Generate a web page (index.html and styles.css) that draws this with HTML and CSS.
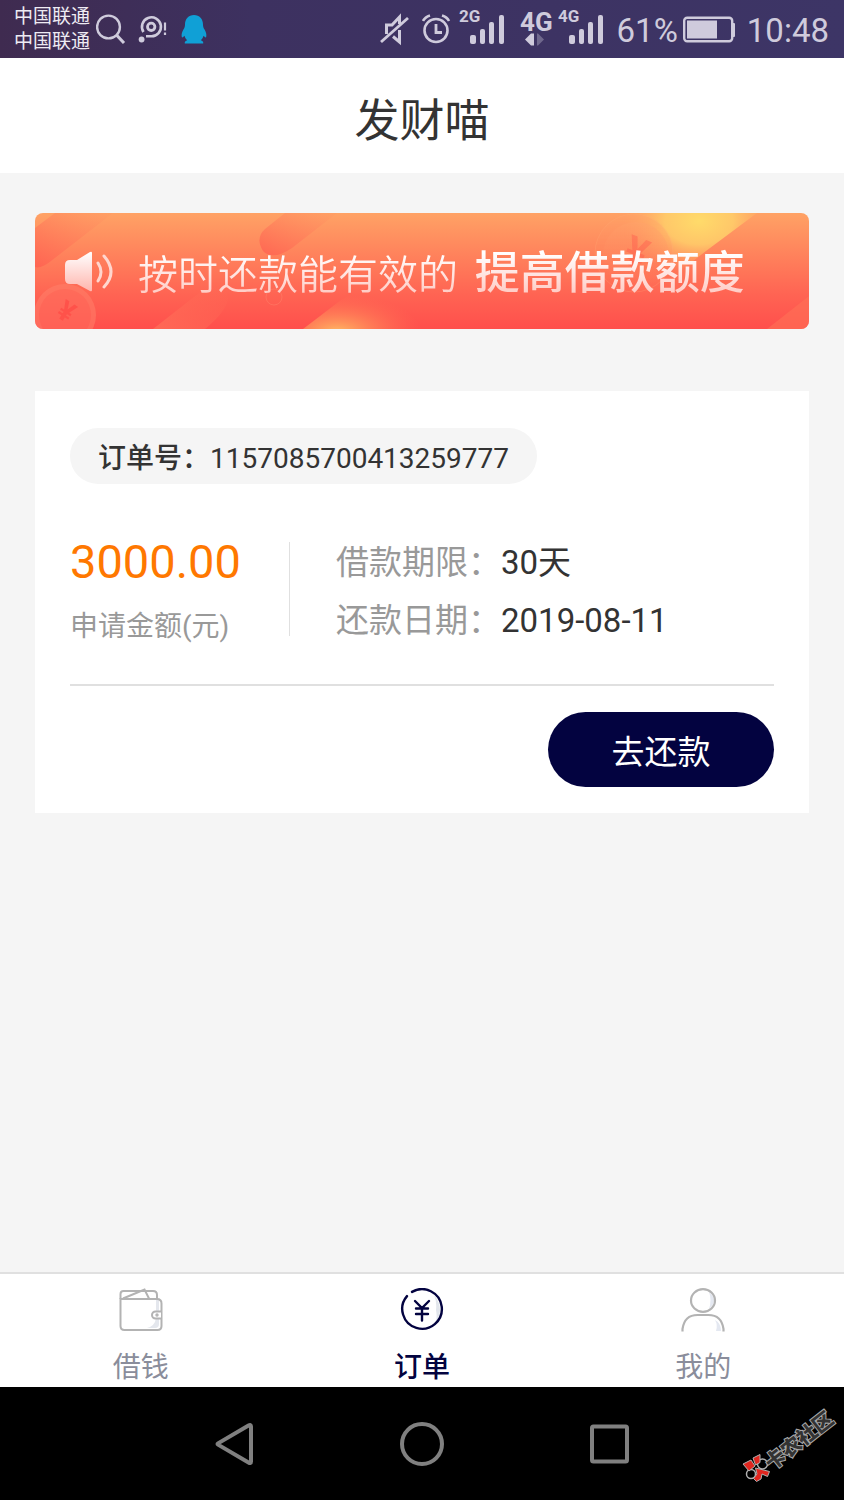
FILE: index.html
```html
<!DOCTYPE html>
<html lang="zh-CN">
<head>
<meta charset="utf-8">
<meta name="viewport" content="width=device-width, initial-scale=1">
<title>发财喵</title>
<link rel="stylesheet" href="styles.css">
</head>
<body>
<div class="status-bar">
  <div class="status-left">
    <div class="carriers"><span>中国联通</span><span>中国联通</span></div>
    <svg width="30" height="32" viewBox="0 0 30 32" fill="none" stroke="#cfcbdc" stroke-width="2.4" aria-hidden="true"><circle cx="12.500" cy="14" r="11.4"/><path d="M20.500 22l7.500 8" stroke-width="3"/></svg>
    <svg class="icon-chat" width="30" height="30" viewBox="0 0 30 30" fill="none" stroke="#cfcbdc" aria-hidden="true"><path d="M5.500 18A9.500 9.500 0 1 1 13 22.300H8" stroke-width="2.600"/><circle cx="13.200" cy="12.800" r="3.700" stroke-width="2.800"/><circle cx="3.600" cy="25.500" r="2.900" fill="#cfcbdc" stroke="none"/><path d="M27 8.500v8M27 18.500v2.500" stroke-width="2.200"/></svg>
    <svg class="icon-qq" width="26" height="31" viewBox="0 0 26 31" fill="#10a0d6" aria-hidden="true"><path d="M13 1C7.500 1 4 5 4 10.500c0 2-.4 3.200-1.400 4.800C1 18 .2 20.500.8 23c.3 1 1.500 0 2.700-1.200.4 2 1.300 3.200 2.700 4.500-1.700.6-2.800 1.500-2.400 3.200h18.400c.4-1.700-.7-2.600-2.400-3.200 1.400-1.300 2.300-2.500 2.700-4.500 1.200 1.200 2.400 2.200 2.700 1.200.6-2.500-.2-5-1.800-7.700-1-1.600-1.400-2.800-1.400-4.800C22 5 18.500 1 13 1z"/></svg>
  </div>
  <div class="status-right">
    <svg width="30" height="34" viewBox="0 0 30 34" fill="none" stroke="#cfcbdc" stroke-width="2.800" aria-hidden="true"><path d="M1 30L28 6"/><path d="M6.500 22V13h5.500L19.500 5v7M19.500 18v12L13 24.500" stroke-width="3"/></svg>
    <svg class="icon-alarm" width="30" height="34" viewBox="0 0 30 34" fill="none" stroke="#cfcbdc" stroke-width="2.600" aria-hidden="true"><circle cx="14" cy="18.500" r="11.500"/><path d="M14 12v8.500h6" stroke-width="2.800"/><path d="M1 9Q3 5 8 3.500M20 3.500Q25 5 27 9"/></svg>
    <svg class="icon-signal" width="48" height="44" viewBox="0 0 48 44" fill="#cfcbdc" role="img" aria-label="2G"><text x="0" y="15" class="net-label">2G</text><rect x="11" y="28" width="6" height="9" rx="2"/><rect x="21" y="22" width="5" height="15" rx="2"/><rect x="30" y="15" width="5" height="22" rx="2"/><rect x="40" y="8" width="5" height="29" rx="2"/></svg>
    <svg class="icon-data" width="32" height="44" viewBox="0 0 32 44" fill="#cfcbdc" role="img" aria-label="4G"><text x="0" y="24" class="data-label">4G</text><path d="M5 32.500l6-6h3v12h-3z"/><path d="M24 32.500l-6-6h-1v12h1z" opacity=".35"/></svg>
    <svg class="icon-signal-second" width="48" height="44" viewBox="0 0 48 44" fill="#cfcbdc" role="img" aria-label="4G"><text x="0" y="15" class="net-label">4G</text><rect x="11" y="28" width="6" height="9" rx="2"/><rect x="21" y="22" width="5" height="15" rx="2"/><rect x="30" y="15" width="5" height="22" rx="2"/><rect x="40" y="8" width="5" height="29" rx="2"/></svg>
    <span class="percent">61%</span>
    <svg width="53" height="28" viewBox="0 0 53 28" aria-hidden="true"><rect x="1.200" y="2.700" width="48" height="23.600" rx="3" fill="none" stroke="#cfcbdc" stroke-width="2.400"/><rect x="4" y="5.500" width="30" height="18" fill="#cfcbdc"/><rect x="49" y="8" width="3" height="14" rx="1" fill="#cfcbdc"/></svg>
    <time class="clock">10:48</time>
  </div>
</div>

<header class="title-bar"><h1>发财喵</h1></header>

<main class="content">
  <section class="banner">
    <svg class="banner-art" viewBox="0 0 774 116" preserveAspectRatio="xMidYMid slice" aria-hidden="true">
      <defs>
        <linearGradient id="base" x1="0" y1="0" x2="0" y2="1"><stop offset="0" stop-color="#ffa265"/><stop offset=".7" stop-color="#ff6453"/><stop offset="1" stop-color="#ff4f4c"/></linearGradient>
        <linearGradient id="band" x1="0" y1="1" x2="1" y2="0"><stop offset="0" stop-color="#ff5f50" stop-opacity=".8"/><stop offset="1" stop-color="#ff8a60" stop-opacity=".1"/></linearGradient>
        <linearGradient id="pale" x1="0" y1="1" x2="1" y2="0"><stop offset="0" stop-color="#ff7a5c" stop-opacity=".6"/><stop offset="1" stop-color="#ff7058" stop-opacity="0"/></linearGradient>
        <radialGradient id="sun"><stop offset="0" stop-color="#ffdb6a"/><stop offset=".45" stop-color="#ffd06a" stop-opacity=".85"/><stop offset="1" stop-color="#ffa866" stop-opacity="0"/></radialGradient>
        <radialGradient id="glow"><stop offset="0" stop-color="#ffba63"/><stop offset="1" stop-color="#ff7055" stop-opacity="0"/></radialGradient>
        <linearGradient id="coin" x1="0" y1="0" x2="0" y2="1"><stop offset="0" stop-color="#ffa36a" stop-opacity=".8"/><stop offset="1" stop-color="#ff7a5c" stop-opacity="0"/></linearGradient>
        <clipPath id="sun-cut"><path d="M540 0H722L671 38L640 62H540z"/></clipPath>
        <clipPath id="glow-cut"><path d="M268 116L306 87Q318 78 340 78H420V116z"/></clipPath>
        <linearGradient id="horn" x1="0" y1="0" x2="0" y2="1"><stop offset="0" stop-color="#fff"/><stop offset="1" stop-color="#ffb5ad"/></linearGradient>
      </defs>
      <rect width="774" height="116" fill="url(#base)"/>
      <path d="M0 15L20 0H78L16 48Q6 56 0 54z" fill="url(#band)"/>
      <path d="M230 16L250 0H302L257 35Q238 48 228 38Q220 25 230 16z" fill="url(#band)"/>
      <path d="M118 116L164 80Q190 65 193 85Q192 98 170 116z" fill="url(#pale)"/>
      <path d="M732 116L774 83V116z" fill="#ff7256" opacity=".6"/>
      <ellipse cx="664" cy="8" rx="76" ry="52" fill="url(#sun)" clip-path="url(#sun-cut)"/>
      <ellipse cx="302" cy="119" rx="85" ry="38" fill="url(#glow)" clip-path="url(#glow-cut)"/>
      <circle cx="239" cy="84" r="8" fill="none" stroke="#ff8169" stroke-width="1" opacity=".5"/>
      <g fill="#ff806a" opacity=".55"><circle cx="30" cy="102" r="31"/><circle cx="30" cy="102" r="26" fill="#ff6f5f"/></g>
      <text class="coin-mark" x="0" y="9" font-size="28" transform="translate(31 99) rotate(33)" opacity=".8">¥</text>
      <circle cx="599" cy="40" r="39" fill="url(#coin)" stroke="#ffb07c" stroke-opacity=".5" opacity=".45"/><circle cx="601" cy="42" r="33" fill="url(#coin)" opacity=".5"/>
      <text class="coin-mark" x="0" y="14" font-size="42" transform="translate(601 40) rotate(22)" opacity=".35">¥</text>
    </svg>
    <svg class="speaker" width="50" height="44" viewBox="0 0 50 44" aria-hidden="true"><path d="M6 11h7L26 3q2-1 2 1v37q0 2-2 1L13 35H6q-5 0-5-5V16q0-5 5-5z" fill="url(#horn)"/><path d="M34 14q6 9 0 18M40 7q14 16 0 31" fill="none" stroke="#ffd6ce" stroke-width="3" stroke-linecap="round"/></svg>
    <p class="banner-text">按时还款能有效的 <strong>提高借款额度</strong></p>
  </section>

  <article class="order-card">
    <p class="order-number"><span>订单号：</span>1157085700413259777</p>
    <div class="order-body">
      <div class="amount">
        <p class="amount-value">3000.00</p>
        <p class="amount-label">申请金额(元)</p>
      </div>
      <dl class="terms">
        <div><dt>借款期限：</dt><dd>30天</dd></div>
        <div><dt>还款日期：</dt><dd>2019-08-11</dd></div>
      </dl>
    </div>
    <div class="order-actions"><button type="button" class="repay">去还款</button></div>
  </article>
</main>

<nav class="tabs">
  <a href="#borrow">
    <svg width="44" height="44" viewBox="0 0 44 44" fill="none" stroke="#b3b3b3" stroke-width="2" aria-hidden="true"><path d="M40 11v25q0 4-4 4h-8q8-2 9-10V11z" fill="#e4e7ed" stroke="none"/><path d="M1.500 11V6q0-3 3-3H34q4 0 4 4v4"/><path d="M4 10.500L25.500 1.500 30 10.500"/><path d="M1.500 11H38q4.500 0 4.500 4.500V38q0 4-4 4H5.500q-4 0-4-4z"/><path d="M42 23.500h-5.500a3.500 3.500 0 0 0 0 7H42" fill="#fff"/><circle cx="38" cy="27" r=".7"/></svg>
    <span>借钱</span>
  </a>
  <a href="#orders" class="active" aria-current="page">
    <svg width="44" height="44" viewBox="0 0 44 44" fill="none" stroke="#030340" stroke-width="2.400" stroke-linecap="round" aria-hidden="true"><path d="M34 7Q46 22 34 37Q38 32 36 22Q37 13 34 7z" fill="#e2e6ec" stroke="none"/><path d="M12 3.900A19.800 19.800 0 1 1 7 8.100"/><path d="M15 13l7 7 7-7M22 20v12.500M16 20.500h12M16 26h12"/></svg>
    <span>订单</span>
  </a>
  <a href="#me">
    <svg width="44" height="44" viewBox="0 0 44 44" fill="none" stroke="#b3b3b3" stroke-width="2.200" aria-hidden="true"><path d="M28 4q10 8 0 17 3-9 0-17zM34 32q6 3 6 11h-5q2-6-1-11z" fill="#e4e8f1" stroke="none"/><ellipse cx="22" cy="12.500" rx="12" ry="11.300"/><path d="M1.500 43.500V41q2-14 15-14h11q13 0 15 14v2.500"/></svg>
    <span>我的</span>
  </a>
</nav>

<div class="system-nav">
  <button type="button" aria-label="返回"><svg width="44" height="46" viewBox="0 0 44 46"><path d="M6 23.600Q5 23 6 22.400L36.500 4.500Q39 3 39 5.500v35q0 2.500-2.500 1z"/></svg></button>
  <button type="button" aria-label="主屏幕"><svg width="44" height="46" viewBox="0 0 44 46"><circle cx="22" cy="23" r="20"/></svg></button>
  <button type="button" aria-label="最近任务"><svg width="44" height="46" viewBox="0 0 44 46"><rect x="4" y="5.500" width="35" height="35" rx="1.500"/></svg></button>
  <svg class="watermark" width="108" height="92" viewBox="0 -8 108 92" role="img" aria-label="卡农社区">
    <g stroke="#b0b0b0" stroke-width="1"><circle cx="16" cy="70" r="4.500" fill="none" stroke-width="1.500"/><circle cx="27.500" cy="60" r="5" fill="none" stroke-width="1.500"/><path d="M8 60l8-4 4 6-6 5zM18 54l7-3.500v8l-4.500 2.500zM20.500 64l14 3.500-2 5-5.500-2.500-1 5-4.500 2.500-3-3 3.500-4.500z" fill="#e0261f"/></g>
    <g transform="translate(37 67) rotate(-38)"><text class="mark-text" x="0" y="0">卡农社区</text></g>
  </svg>
</div>
</body>
</html>
```
FILE: styles.css
```css
* { box-sizing: border-box; }

body {
  margin: 0;
  min-height: 100vh;
  display: flex;
  flex-direction: column;
  background: #f5f5f5;
  color: #333;
  font-family: Roboto, "Noto Sans CJK SC", sans-serif;
}

h1, p, dl, dd { margin: 0; }
svg { display: block; flex: none; }

.status-bar {
  height: 58px;
  padding: 0 15px 0 14px;
  display: flex;
  justify-content: space-between;
  align-items: center;
  background: linear-gradient(90deg, #3f2b50, #3d3160 30%, #3d3566);
  color: #cfcbdc;
}

.status-left, .status-right { display: flex; align-items: center; }

.carriers {
  display: flex;
  flex-direction: column;
  margin-right: 6px;
  color: #eeebf3;
  font-size: 19px;
  line-height: 25px;
}

.icon-chat { margin-left: 12px; }
.icon-qq { margin-left: 13px; }
.icon-alarm { margin-left: 12px; }
.icon-signal { margin-left: 7px; }
.icon-data { margin-left: 13px; }
.icon-signal-second { margin-left: 6px; }
.net-label { font-size: 17px; font-weight: 700; }
.data-label { font-size: 26px; font-weight: 700; }

.percent, .clock { padding-top: 3px; font-size: 33px; }
.percent { margin-left: 11px; margin-right: 5px; }
.clock { margin-left: 11px; }

.title-bar {
  height: 115px;
  padding-top: 3px;
  display: flex;
  align-items: center;
  justify-content: center;
  background: #fff;
}

.title-bar h1 { font-size: 45px; font-weight: 400; }

.content { flex: 1; padding: 40px 35px; }

.banner {
  position: relative;
  display: flex;
  align-items: center;
  gap: 24px;
  height: 116px;
  padding-left: 29px;
  border-radius: 8px;
  overflow: hidden;
}

.banner-art { position: absolute; inset: 0; width: 100%; height: 100%; }
.speaker, .banner-text { position: relative; }
.coin-mark { fill: #ff4e48; font-weight: 700; text-anchor: middle; }

.banner-text {
  padding-top: 8px;
  font-size: 40px;
  font-weight: 350;
  line-height: 60px;
  white-space: nowrap;
  color: transparent;
  background: linear-gradient(#fff 25%, #ffc4bc 90%);
  background-clip: text;
  -webkit-background-clip: text;
}

.banner-text strong { margin-left: 7px; font-size: 45px; font-weight: 500; }

.order-card {
  margin-top: 62px;
  padding: 37px 35px 26px;
  background: #fff;
}

.order-number {
  width: fit-content;
  padding: 6px 28px 0;
  border-radius: 28px;
  background: #f5f5f5;
  font-size: 28px;
  line-height: 50px;
}

.order-number span { font-weight: 500; }

.order-body {
  display: flex;
  align-items: flex-start;
  padding: 50px 0 34px;
  border-bottom: 2px solid #e0e0e0;
}

.amount {
  flex: none;
  display: flex;
  flex-direction: column;
  justify-content: space-between;
  width: 220px;
  height: 94px;
  margin-top: 8px;
  border-right: 1px solid #e0e0e0;
}

.amount-value { color: #ff7800; font-size: 47px; line-height: 40px; }
.amount-label { color: #999; font-size: 28px; line-height: 18px; }

.terms { padding-left: 46px; font-size: 33px; line-height: 58px; }
.terms div { display: flex; }
.terms dt { color: #999; }

.order-actions { display: flex; justify-content: flex-end; padding-top: 26px; }

.repay {
  width: 226px;
  height: 75px;
  border: 0;
  border-radius: 38px;
  background: #030340;
  color: #fff;
  font: inherit;
  font-size: 33px;
}

.tabs {
  display: flex;
  height: 115px;
  border-top: 2px solid #e0e0e0;
  background: #fff;
}

.tabs a {
  flex: 1;
  display: flex;
  flex-direction: column;
  align-items: center;
  gap: 16px;
  padding-top: 14px;
  color: #8a8d9b;
  font-size: 28px;
  line-height: 40px;
  text-decoration: none;
}

.tabs .active { color: #030340; font-weight: 500; }

.system-nav {
  position: relative;
  display: flex;
  justify-content: center;
  gap: 144px;
  height: 113px;
  background: #000;
}

.system-nav button {
  padding: 0;
  border: 0;
  background: none;
  fill: none;
  stroke: #808080;
  stroke-width: 4px;
}

.watermark { position: absolute; right: 1px; bottom: 12px; }

.mark-text {
  font-size: 20px;
  font-weight: 900;
  fill: #333;
  stroke: #a8a8a8;
  stroke-width: 2px;
  paint-order: stroke;
}
```
